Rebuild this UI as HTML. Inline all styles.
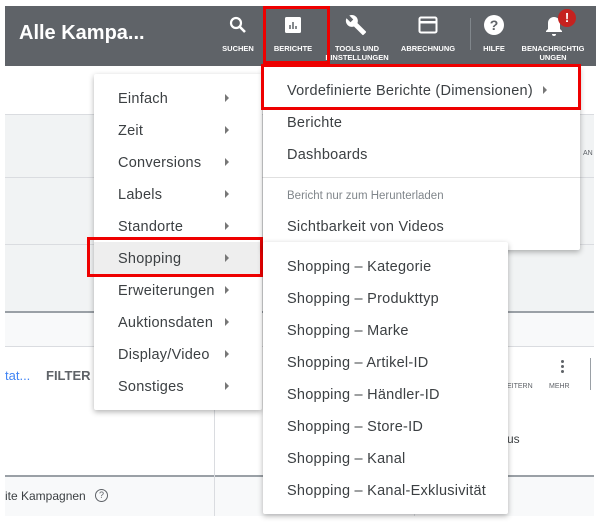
<!DOCTYPE html>
<html><head><meta charset="utf-8"><style>
*{margin:0;padding:0;box-sizing:border-box}
body{width:602px;height:526px;background:#fff;position:relative;overflow:hidden;font-family:"Liberation Sans",Arial,sans-serif;color:#3c4043}
.a{position:absolute}
.hdr{left:5px;top:6px;width:591px;height:60px;background:#5f6368}
.title{left:19px;top:22px;color:#fff;font-size:20px;font-weight:bold}
.lbl{position:absolute;color:#fff;font-size:7.5px;font-weight:bold;text-align:center;line-height:9px;transform:translateX(-50%);white-space:nowrap}
.menu{background:#fff;box-shadow:0 2px 6px rgba(0,0,0,.3);border-radius:2px}
.it{position:absolute;font-size:14.5px;color:#3c4043;white-space:nowrap;line-height:18px;letter-spacing:.25px}
.arr{position:absolute;width:0;height:0;border-left:4px solid #777;border-top:4px solid transparent;border-bottom:4px solid transparent}
.red{position:absolute;border:3px solid #e00}
</style></head><body>
<div class="a" style="left:5px;top:66px;width:589px;height:450px;background:#fff"></div>
<div class="a" style="left:5px;top:114px;width:589px;height:198px;background:#f1f3f4;border-top:1px solid #dadce0"></div>
<div class="a" style="left:5px;top:177px;width:589px;height:1px;background:#dadce0"></div>
<div class="a" style="left:5px;top:244px;width:589px;height:1px;background:#dadce0"></div>
<div class="a" style="left:5px;top:311px;width:589px;height:2px;background:#9aa0a6"></div>
<div class="a" style="left:5px;top:313px;width:589px;height:33px;background:#f8f9fa"></div>
<div class="a" style="left:5px;top:346px;width:589px;height:1px;background:#dadce0"></div>
<div class="a" style="left:5px;top:475px;width:589px;height:2px;background:#9aa0a6"></div>
<div class="a" style="left:5px;top:477px;width:589px;height:39px;background:#f8f9fa"></div>
<div class="a" style="left:214px;top:402px;width:1px;height:114px;background:#dadce0"></div>
<div class="a" style="left:414px;top:402px;width:1px;height:114px;background:#dadce0"></div>
<div class="a" style="left:5px;top:368px;font-size:13px;color:#4285f4">tat...</div>
<div class="a" style="left:46px;top:368px;font-size:13px;color:#5f6368;font-weight:bold">FILTER</div>
<div class="a" style="left:5px;top:489px;font-size:12px;color:#3c4043">ite Kampagnen</div>
<div class="a" style="left:95px;top:489px;width:13px;height:13px;border:1px solid #5f6368;border-radius:50%;font-size:9px;text-align:center;line-height:11px;color:#5f6368">?</div>
<div class="a" style="left:507px;top:432px;font-size:12px">us</div>
<div class="a" style="left:507px;top:383px;font-size:7px;color:#5f6368">EITERN</div>
<div class="a" style="left:549px;top:383px;font-size:7px;color:#5f6368">MEHR</div>
<div class="a" style="left:561px;top:360px;width:3px;height:3px;background:#5f6368;border-radius:50%;box-shadow:0 5px 0 #5f6368,0 10px 0 #5f6368"></div>
<div class="a" style="left:590px;top:358px;width:1px;height:32px;background:#9aa0a6"></div>
<div class="a" style="left:583px;top:150px;font-size:7px;color:#5f6368">AN</div>
<div class="a hdr"></div>
<div class="a title">Alle Kampa...</div>
<svg class="a" style="left:229px;top:16px" width="18" height="18" viewBox="0 0 18 18"><circle cx="7" cy="7" r="5" fill="none" stroke="#fff" stroke-width="2.2"/><path d="M10.5 10.5L16 16" stroke="#fff" stroke-width="2.6"/></svg>
<div class="lbl" style="left:238px;top:44px">SUCHEN</div>
<svg class="a" style="left:284px;top:16px" width="18" height="18"><rect x="1" y="1" width="16" height="16" rx="1.5" fill="#fff"/><path d="M6 13V9M9 13V6M12 13V10" stroke="#5f6368" stroke-width="1.5"/></svg>
<div class="lbl" style="left:293px;top:44px">BERICHTE</div>
<svg class="a" style="left:345px;top:14px" width="22" height="22" viewBox="0 0 24 24"><path d="M22.7 19l-9.1-9.1c.9-2.3.4-5-1.5-6.9-2-2-5-2.4-7.4-1.3L9 6 6 9 1.6 4.7C.4 7.1.9 10.1 2.9 12.1c1.9 1.9 4.6 2.4 6.9 1.5l9.1 9.1c.4.4 1 .4 1.4 0l2.3-2.3c.5-.4.5-1.1.1-1.4z" fill="#fff"/></svg>
<div class="lbl" style="left:357px;top:44px">TOOLS UND<br>EINSTELLUNGEN</div>
<svg class="a" style="left:418px;top:16px" width="20" height="18"><rect x="1.5" y="1.5" width="17" height="15" rx="1.5" fill="none" stroke="#fff" stroke-width="2"/><rect x="1.5" y="5" width="17" height="2.5" fill="#fff"/></svg>
<div class="lbl" style="left:428px;top:44px">ABRECHNUNG</div>
<div class="a" style="left:470px;top:18px;width:1px;height:32px;background:#80868b"></div>
<svg class="a" style="left:484px;top:15px" width="20" height="20"><circle cx="10" cy="10" r="10" fill="#fff"/><text x="10" y="15" text-anchor="middle" font-size="14" font-weight="bold" fill="#5f6368" font-family="Liberation Sans">?</text></svg>
<div class="lbl" style="left:494px;top:44px">HILFE</div>
<svg class="a" style="left:545px;top:15px" width="18" height="22"><path d="M9 2c-3.5 0-6 2.5-6 6v6l-2 2v1h16v-1l-2-2V8c0-3.5-2.5-6-6-6z" fill="#fff"/><path d="M7 19a2 2 0 0 0 4 0z" fill="#fff"/></svg>
<div class="a" style="left:558px;top:9px;width:18px;height:18px;border-radius:50%;background:#c5221f;color:#fff;font-size:13px;font-weight:bold;text-align:center;line-height:18px">!</div>
<div class="lbl" style="left:553px;top:44px">BENACHRICHTIG<br>UNGEN</div>
<div class="red" style="left:263px;top:6px;width:67px;height:58px"></div>

<div class="a menu" style="left:94px;top:74px;width:168px;height:336px"></div>
<div class="a" style="left:94px;top:242px;width:168px;height:32px;background:#eee"></div>
<div class="it" style="left:118px;top:90px">Einfach</div><div class="arr" style="left:225px;top:94px"></div>
<div class="it" style="left:118px;top:122px">Zeit</div><div class="arr" style="left:225px;top:126px"></div>
<div class="it" style="left:118px;top:154px">Conversions</div><div class="arr" style="left:225px;top:158px"></div>
<div class="it" style="left:118px;top:186px">Labels</div><div class="arr" style="left:225px;top:190px"></div>
<div class="it" style="left:118px;top:218px">Standorte</div><div class="arr" style="left:225px;top:222px"></div>
<div class="it" style="left:118px;top:250px">Shopping</div><div class="arr" style="left:225px;top:254px"></div>
<div class="it" style="left:118px;top:282px">Erweiterungen</div><div class="arr" style="left:225px;top:286px"></div>
<div class="it" style="left:118px;top:314px">Auktionsdaten</div><div class="arr" style="left:225px;top:318px"></div>
<div class="it" style="left:118px;top:346px">Display/Video</div><div class="arr" style="left:225px;top:350px"></div>
<div class="it" style="left:118px;top:378px">Sonstiges</div><div class="arr" style="left:225px;top:382px"></div>
<div class="red" style="left:87px;top:237px;width:176px;height:40px"></div>

<div class="a menu" style="left:263px;top:66px;width:317px;height:184px"></div>
<div class="it" style="left:287px;top:82px">Vordefinierte Berichte (Dimensionen)</div><div class="arr" style="left:543px;top:86px"></div>
<div class="it" style="left:287px;top:114px">Berichte</div>
<div class="it" style="left:287px;top:146px">Dashboards</div>
<div class="a" style="left:263px;top:177px;width:317px;height:1px;background:#e0e0e0"></div>
<div class="a" style="left:287px;top:190px;font-size:11.5px;color:#80868b">Bericht nur zum Herunterladen</div>
<div class="it" style="left:287px;top:218px">Sichtbarkeit von Videos</div>
<div class="red" style="left:261px;top:64px;width:320px;height:46px"></div>

<div class="a menu" style="left:263px;top:242px;width:245px;height:272px"></div>
<div class="it" style="left:287px;top:258px">Shopping – Kategorie</div>
<div class="it" style="left:287px;top:290px">Shopping – Produkttyp</div>
<div class="it" style="left:287px;top:322px">Shopping – Marke</div>
<div class="it" style="left:287px;top:354px">Shopping – Artikel-ID</div>
<div class="it" style="left:287px;top:386px">Shopping – Händler-ID</div>
<div class="it" style="left:287px;top:418px">Shopping – Store-ID</div>
<div class="it" style="left:287px;top:450px">Shopping – Kanal</div>
<div class="it" style="left:287px;top:482px">Shopping – Kanal-Exklusivität</div>
</body></html>
